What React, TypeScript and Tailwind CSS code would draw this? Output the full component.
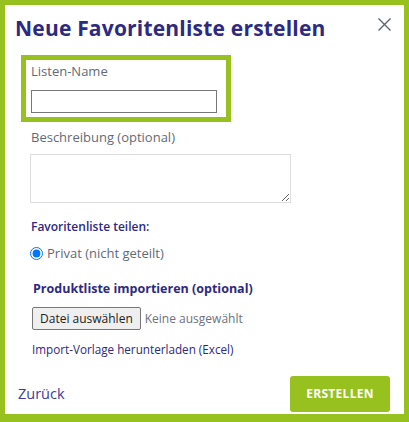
import React, { useState } from "react";

export default function App() {
  const [name, setName] = useState("");
  const [desc, setDesc] = useState("");

  return (
    <div className="w-[409px] h-[422px] bg-[#96c11f] pt-[5px] px-[5px] pb-[8px] font-['Open_Sans',sans-serif]">
      <div className="relative h-full bg-white pl-[10px] pt-[9px]">
        <h1 className="text-[21px] leading-[28px] font-bold tracking-[0.2px] text-[#2d2a80]">
          Neue Favoritenliste erstellen
        </h1>
        <button className="absolute right-[13px] top-[13px] w-[13px] h-[13px] text-[#5a6570]">
          <svg viewBox="0 0 13 13" width="13" height="13" fill="none" stroke="currentColor" strokeWidth="1.4">
            <path d="M0.5 0.5L12.5 12.5M12.5 0.5L0.5 12.5" />
          </svg>
        </button>

        <div className="mt-[13px] ml-[6px] w-[210px] h-[67px] border-[5px] border-[#96c11f] pl-[5px] pt-[2px]">
          <label className="block text-[13px] leading-[18px] text-[#5f6b7a]">Listen-Name</label>
          <input
            value={name}
            onChange={(e) => setName(e.target.value)}
            className="mt-[10px] block w-[186px] h-[23px] border border-[#777] outline-none px-1 text-[13px]"
          />
        </div>

        <div className="pl-[16px]">
          <label className="block mt-[6px] text-[13px] leading-[18px] text-[#5f6b7a]">
            Beschreibung (optional)
          </label>
          <textarea
            value={desc}
            onChange={(e) => setDesc(e.target.value)}
            className="mt-[8px] block w-[261px] h-[49px] border border-[#ddd] outline-none -ml-px"
          />

          <div className="mt-[15px] text-[12px] leading-[18px] font-semibold text-[#2d2a80]">
            Favoritenliste teilen:
          </div>
          <label className="mt-[8px] flex items-center gap-[4px] text-[13px] leading-[18px] text-[#5f6b7a] -ml-px">
            <input type="radio" defaultChecked className="m-0 w-[13px] h-[13px] accent-[#0075ff]" />
            Privat (nicht geteilt)
          </label>

          <div className="mt-[18px] pl-[2px] text-[12.5px] leading-[18px] font-bold text-[#2d2a80]">
            Produktliste importieren (optional)
          </div>
          <div className="mt-[9px] flex items-center gap-[4px] pl-[1px]">
            <button className="h-[23px] px-[7px] border border-[#777] rounded-[2px] bg-[#efefef] text-[12px] text-[#222]">
              Datei auswählen
            </button>
            <span className="text-[12px] text-[#6b7280]">Keine ausgewählt</span>
          </div>
          <a href="#" className="block mt-[10px] pl-[1px] text-[11.7px] leading-[18px] text-[#2d2a80]">
            Import-Vorlage herunterladen (Excel)
          </a>
        </div>

        <div className="absolute left-[13px] right-[14px] bottom-[2px] flex items-center justify-between">
          <a href="#" className="text-[14.5px] text-[#3d3a9a]">Zurück</a>
          <button className="w-[100px] h-[36px] rounded-[3px] bg-[#96c11f] text-white text-[12px] font-bold tracking-[0.3px]">
            ERSTELLEN
          </button>
        </div>
      </div>
    </div>
  );
}
